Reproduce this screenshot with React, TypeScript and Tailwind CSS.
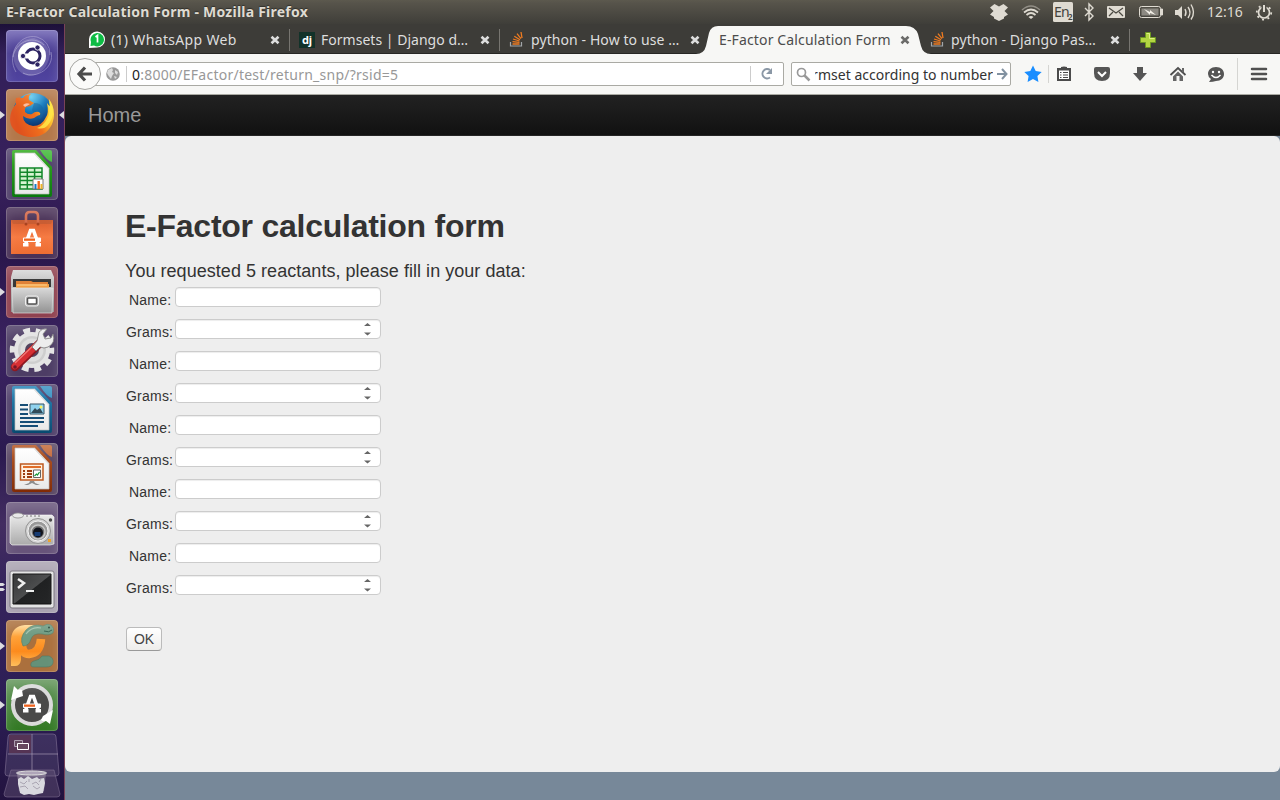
import React from "react";

const ui = "font-['Noto_Sans','Open_Sans',sans-serif]";

/* ---------- Launcher ---------- */

function Tile({ color, mark, focused, children }: { color: string; mark?: "one" | "two"; focused?: boolean; children: React.ReactNode }) {
  return (
    <div className="relative flex h-[52px] w-full shrink-0 justify-center pr-px">
      <div className={`relative h-[52px] w-[52px] overflow-hidden rounded-[4px] ${color}`}>
        <svg width="52" height="52" viewBox="0 0 52 52">{children}</svg>
        <div className="absolute inset-0 rounded-[4px] shadow-[inset_0_0_0_1px_rgba(255,255,255,0.17),inset_0_8px_12px_rgba(255,255,255,0.18)]" />
      </div>
      {mark === "one" && (
        <svg className="absolute left-0 top-[21px]" width="5" height="10"><path d="M0 1 5 5 0 9z" fill="#dcdce0" /></svg>
      )}
      {mark === "two" && (
        <svg className="absolute left-0 top-[21px]" width="5" height="10"><path d="M0 1h3l2 1.500-2 1.500H0zM0 6h3l2 1.500L3 9H0z" fill="#dcdce0" /></svg>
      )}
      {focused && (
        <svg className="absolute right-0 top-[21px]" width="6" height="10"><path d="M6 1 1 5 6 9z" fill="#dcdce0" /></svg>
      )}
    </div>
  );
}

function Sheet({ a, b, tint, children }: { a: string; b: string; tint: string; children: React.ReactNode }) {
  return (
    <>
      <defs>
        <linearGradient id={`g${a.slice(1)}`} x1="0" y1="0" x2="0" y2="1"><stop offset="0" stopColor={a} /><stop offset="1" stopColor={b} /></linearGradient>
        <linearGradient id="paper" x1="0" y1="0" x2="0" y2="1"><stop offset="0" stopColor="#fff" /><stop offset="1" stopColor="#e9e9e9" /></linearGradient>
      </defs>
      <path d="M8 2h22l16 17v28q0 2-2 2H8q-2 0-2-2V4q0-2 2-2z" fill={`url(#g${a.slice(1)})`} />
      <path d="M34 2h10q2 0 2 2v10q-5-1-12-12z" fill={tint} />
      <path d="M9 5h19l15 16v25H9z" fill="url(#paper)" stroke="#bdbdbd" strokeWidth=".7" />
      <path d="M28 5l15 16" stroke="#ddd" strokeWidth="1.500" />
      {children}
    </>
  );
}

function LetterA({ y = 0 }: { y?: number }) {
  return (
    <g transform={`translate(0 ${y})`}>
      <path d="M19.500 34 24.500 20h3L32.500 34" fill="none" stroke="#fff" strokeWidth="3.600" />
      <path d="M17 32.500h5.500v3.500H17zM29.500 32.500H35v3.500h-5.500z" fill="#fff" />
      <rect x="17" y="27" width="18" height="4.500" rx="1" fill="#fff" />
      <rect x="18" y="28" width="11" height="2.300" fill="#f0641e" />
    </g>
  );
}

function Launcher() {
  return (
    <aside className="relative flex w-[65px] shrink-0 flex-col gap-[7px] overflow-hidden border-r border-[#794359] bg-[linear-gradient(180deg,#1c1039_0px,#33205a_30px,#37205b_160px,#2a174c_230px,#3b2361_330px,#2b1a50_430px,#432d61_500px,#36245d_560px,#2c1e55_680px,#22133f_776px)] pt-[6px]">
      <Tile color="bg-[linear-gradient(180deg,#6c60b2,#483b91_45%,#5044a0)]">
        <g fill="none" stroke="#b3abd9" strokeOpacity=".55">
          <path d="M10 42C0 25 13 3 31 7q13 4 13 18" /><path d="M7 27C9 13 26 4 38 15" /><path d="M45 22c4 15-14 28-28 21" />
        </g>
        <path d="M7 26Q9 9 28 8q14 4 16 17Q40 45 23 46 9 43 7 26" fill="#fff" opacity=".16" />
        <circle cx="26" cy="26" r="14" fill="#fff" />
        <circle cx="27" cy="26" r="7" fill="none" stroke="#2c2362" strokeWidth="3" />
        <path d="M18 26h4M30 19l2-3M30 33l2 3" stroke="#fff" strokeWidth="5" />
        <g fill="#2c2362" stroke="#fff" strokeWidth=".8"><circle cx="17" cy="26" r="2.600" /><circle cx="31.500" cy="17.500" r="2.600" /><circle cx="31.500" cy="34.500" r="2.600" /></g>
      </Tile>
      <Tile color="bg-[#b37749]" mark="one" focused>
        <defs>
          <radialGradient id="globe" cx=".45" cy=".1" r=".8"><stop offset="0" stopColor="#67cdf0" /><stop offset=".45" stopColor="#187bbd" /><stop offset="1" stopColor="#0b2862" /></radialGradient>
          <linearGradient id="fox" gradientUnits="userSpaceOnUse" x1="46" y1="16" x2="10" y2="32"><stop offset="0" stopColor="#ffe640" /><stop offset=".25" stopColor="#fdb327" /><stop offset=".5" stopColor="#f0701d" /><stop offset="1" stopColor="#e0521d" /></linearGradient>
        </defs>
        <circle cx="27" cy="24" r="20" fill="url(#globe)" />
        <path d="M28 14q7 0 9 5 2 7-3 11l-5-3-3-6z" fill="#17649e" opacity=".5" />
        <path d="M10 9q-1 3 0 6-6 7-6 15c0 11 10 18 22 18 14 0 22-11 22-23 0-6-2-11-5-15l1 8-3-4q2 10-1 14-4 9-13 9-10-2-10-10 5 4 11 2 4-3 6-3 1-2-1-3-4-1-7 2-4 1-7-2-1-3 1-5l4-1 4-3-5-3q-1-4 2-6-6 0-8 4-4-1-7 0z" fill="url(#fox)" />
        <path d="M42 16q3 7-1 14-4 7-10 9 7 2 11-3 5-6 5-14-1-7-4-10 2 7-1 4z" fill="#ffe747" opacity=".85" />
        <path d="M17 16q3-3 7-1l-5 3z" fill="#f9bda0" />
      </Tile>
      <Tile color="bg-[#51416b]">
        <Sheet a="#35ae21" b="#08770c" tint="#43b93b">
          <path d="M14 20h22v21H14z" fill="#d6f4d1" />
          <path d="M14 20h22v21H14zM14 24.200h22M14 28.400h22M14 32.600h22M14 36.800h22M21.300 20v21M28.600 20v21" fill="none" stroke="#12862a" strokeWidth="1.500" />
          <path d="M27 31h10v10H27z" fill="#fff" stroke="#777" /><path d="M28.500 36h2v5h-2z" fill="#187ac4" /><path d="M31.500 33h2.400v8h-2.400z" fill="#f06a1c" /><path d="M34.500 36h2v5h-2z" fill="#efb52a" />
        </Sheet>
      </Tile>
      <Tile color="bg-[#493157]">
        <defs><linearGradient id="bag" x2="0" y2="1"><stop stopColor="#d95c2e" /><stop offset=".5" stopColor="#f67b43" /><stop offset="1" stopColor="#ed6d32" /></linearGradient></defs>
        <path d="M5 13h42v34H5z" fill="url(#bag)" />
        <path d="M5 13h42l-2 4H7z" fill="#b4552f" opacity=".5" />
        <path d="M20 17V9q0-4 4-4h4q4 0 4 4v8" fill="none" stroke="#d66b4b" strokeWidth="2.600" />
        <circle cx="20" cy="17" r="1.500" fill="#a9411e" /><circle cx="32" cy="17" r="1.500" fill="#a9411e" />
        <LetterA y={3.5} />
      </Tile>
      <Tile color="bg-[#8f414f]" mark="one">
        <defs><linearGradient id="steel" x2="0" y2="1"><stop stopColor="#d8d8d8" /><stop offset="1" stopColor="#929292" /></linearGradient></defs>
        <path d="M7 4h38l3 7v35H5V11z" fill="url(#steel)" />
        <path d="M7 13h38v8H7z" fill="#353535" />
        <path d="M10 15h15l2 1h15v6H10z" fill="#e08135" /><path d="M10 18h33v5H10z" fill="#f2a044" /><path d="M11 19h30" stroke="#ffd594" />
        <path d="M6 22h41l-1 25H7z" fill="url(#steel)" stroke="#dedede" strokeWidth=".7" />
        <rect x="19.500" y="30" width="13" height="10" rx="2" fill="#b6b6b6" stroke="#eee" /><rect x="21.500" y="32" width="9" height="6" rx="1" fill="#fff" stroke="#555" strokeWidth="1.500" />
      </Tile>
      <Tile color="bg-[#4d3d65]">
        <circle cx="26" cy="25" r="19.500" fill="none" stroke="#e4e4e4" strokeWidth="5.500" strokeDasharray="6.600 5.655" strokeDashoffset="3" />
        <circle cx="26" cy="25" r="18" fill="#e4e4e4" /><circle cx="26" cy="25" r="14" fill="#cecece" /><circle cx="26" cy="25" r="11.500" fill="#dedede" /><circle cx="26" cy="25" r="7" fill="#54445e" />
        <path d="M9 42 35 17" stroke="#8d1720" strokeWidth="8.500" strokeLinecap="round" /><path d="M9 41 34 17" stroke="#d62f33" strokeWidth="6.500" strokeLinecap="round" /><path d="M9 38 30 18" stroke="#ee7874" strokeWidth="1.500" />
        <path d="m31 16 2-9q3-4 8-3l-4 5 2 5 6-1 2-4q3 9-5 13-4 2-8 0l-4 4-4-4z" fill="#ededed" stroke="#777" strokeWidth=".8" />
        <circle cx="9" cy="42" r="1.800" fill="#711625" />
      </Tile>
      <Tile color="bg-[#51416b]">
        <Sheet a="#2787bb" b="#074a70" tint="#3c94c4">
          <path d="M14 20h8v2h-8zM14 24.500h8v2h-8zM14 29h8v2h-8zM14 33h24v2H14zM14 37h24v2H14zM14 41h18v2H14z" fill="#174e76" />
          <path d="M24 20h14v10H24z" fill="#8fd2ee" stroke="#385565" /><path d="m25 29 4-5 2 2 3-2 3 5z" fill="#314b59" /><circle cx="35" cy="23" r="1.500" fill="#fff25c" />
        </Sheet>
      </Tile>
      <Tile color="bg-[#594764]">
        <Sheet a="#b85825" b="#812a04" tint="#c46b3c">
          <path d="M14.500 21h22.500v16H14.500z" fill="#fff0df" stroke="#be5a21" strokeWidth="1.500" /><path d="M17 23h18v2H17z" fill="#e06e29" />
          <path d="M17 27h2v2h-2zM17 30h2v2h-2zM17 33h2v2h-2zM21 27h5v2h-5zM21 30h5v2h-5zM21 33h5v2h-5z" fill="#9d3d10" /><path d="M27.500 27h7v7.500h-7z" fill="#fff" stroke="#666" /><path d="m28.500 33 2-2 1 1 2-3" fill="none" stroke="#169936" strokeWidth="1.200" />
          <path d="M24 38h4l1 2 5 2h-4l-4-2-4 2h-4l5-2z" fill="#8d8d8d" />
        </Sheet>
      </Tile>
      <Tile color="bg-[#67547a]">
        <defs><linearGradient id="camera" x2="0" y2="1"><stop stopColor="#ededed" /><stop offset="1" stopColor="#aaa" /></linearGradient></defs>
        <path d="M7 13q5-3 9 0h30l2 2v27L44 43H6l-2-2V15z" fill="url(#camera)" stroke="#fff" strokeWidth=".6" />
        <ellipse cx="12" cy="13.500" rx="5.500" ry="2.500" fill="#e9e9e9" stroke="#888" strokeWidth=".8" /><path d="M20 14h16" stroke="#777" strokeDasharray="2 2" />
        <circle cx="32" cy="29" r="12.500" fill="#d4d4d4" stroke="#929292" /><circle cx="32" cy="29" r="10" fill="#999" stroke="#f2f2f2" /><circle cx="32" cy="30" r="7" fill="#777" stroke="#c8c8c8" strokeWidth="1.500" /><circle cx="32" cy="30.500" r="5" fill="#11131b" /><path d="M28.500 30h6v4h-6z" fill="#173c74" />
        <circle cx="44.500" cy="18" r="1.700" fill="#444" /><path d="M42 37h3v3h-3z" fill="#eea32b" />
      </Tile>
      <Tile color="bg-[#aaa3b1]" mark="two">
        <defs><linearGradient id="term" x2="1" y2="1"><stop stopColor="#343536" /><stop offset=".5" stopColor="#4c4d4e" /><stop offset=".52" stopColor="#202122" /><stop offset="1" stopColor="#252627" /></linearGradient></defs>
        <path d="M4 12q0-2 2-2h40q2 0 2 2v33q0 2-2 2H6q-2 0-2-2z" fill="#e4e4e4" stroke="#77737c" />
        <path d="M7 13h38v30H7z" fill="url(#term)" stroke="#111" />
        <path d="m12 18 6 4-6 5" fill="none" stroke="#eee" strokeWidth="2.500" /><path d="M20 30h8" stroke="#eee" strokeWidth="2" />
      </Tile>
      <Tile color="bg-[#ab703d]" mark="one">
        <defs><linearGradient id="charm" gradientUnits="userSpaceOnUse" x1="0" y1="4" x2="0" y2="46"><stop stopColor="#ffe0a0" /><stop offset=".3" stopColor="#ffa238" /><stop offset=".65" stopColor="#fc8a1c" /><stop offset="1" stopColor="#ffbf5a" /></linearGradient></defs>
        <path d="M25 46q-1-4 3-5 6-1 8-5h7q5 2 4 7-1 4-7 4H28q-2 0-3-1z" fill="#659178" stroke="#4f7a64" strokeWidth=".6" />
        <path d="M5 46V19Q6 6 19 5h11q-8 4-11 11-4 5-4 12v12q-1 6-6 6z" fill="url(#charm)" />
        <path d="M16 20v4q0 10 7 10 11-1 12-15" fill="none" stroke="url(#charm)" strokeWidth="8.500" />
        <path d="M17 26q-4-8 3-16 7-7 17-4 4-3 8-1 4 3 2 8-4 3-11 1-9-1-11 5-2 7-8 7z" fill="#6f9b82" stroke="#547d67" strokeWidth=".6" />
        <path d="M20 14q6-8 15-6" fill="none" stroke="#a3c3ad" strokeWidth="1.200" /><path d="M38 11q5 2 8-1" fill="none" stroke="#315d4c" /><circle cx="43" cy="7.500" r="1" fill="#234539" />
      </Tile>
      <Tile color="bg-[linear-gradient(180deg,#63955b,#317822)]" mark="one">
        <circle cx="26" cy="26" r="19" fill="#4a4a49" stroke="#dadada" strokeWidth="4" />
        <path d="m5 21 3-14 4 4q2-1 4 0l1 6z" fill="#fff" /><path d="m47 31-3 14-4-3q-3 1-5-1l2-4z" fill="#fff" />
        <LetterA y={-2.5} />
      </Tile>
      <svg className="-mt-[6px] shrink-0" width="64" height="67" viewBox="0 0 64 67">
        <path d="M11 2h42q3 0 3 3l3 36q0 3-3 3H8q-3 0-3-3L8 5q0-3 3-3z" fill="#6b5f86" fillOpacity=".32" stroke="#8c7c9e" strokeOpacity=".55" />
        <path d="M32 2v40M8 22h50" stroke="#b5a7bf" strokeOpacity=".6" />
        <path d="M9 3h22v18H9z" fill="#623850" opacity=".65" /><path d="M14.500 8.500h8v6h-8z" fill="#63495f" stroke="#ad9eb0" /><path d="M17.500 11.500h11v6h-11z" fill="#67495f" stroke="#fff" />
        <path d="m11 38-7 24q0 3 3 3h50q3 0 3-3l-6-24z" fill="#776688" fillOpacity=".35" stroke="#87779a" strokeOpacity=".5" />
        <path d="m17 41 2 18q13 3 25 0l2-18z" fill="#b8afbe" fillOpacity=".4" /><ellipse cx="31.500" cy="41" rx="15" ry="2" fill="#afa5b9" stroke="#ddd" />
        <path d="m18 47 3-2 3 2 4-3 4 3 5-2 2 2 5-1 1 5-1 5-1 5-5 1-4 1-5-1-5 1-4-2-1-5-1-4z" fill="#d9d9df" />
        <path d="m20 50 4 2 3-3m5 3 4-2 3 3M20 55l5-1 3 3m5-3 4 3 3-2M29 47v3M41 47l-2 3" stroke="#aaa5b2" fill="none" />
      </svg>
    </aside>
  );
}

/* ---------- Top panel ---------- */

function StatusIcons() {
  return (
    <svg className="absolute right-0 top-0" width="300" height="24" viewBox="980 0 300 24" fill="none" stroke="#dfdbd2">
      <path d="m994.500 4 4.500 2.500 4.500-2.500 4.500 3.500-3.500 3.500 3.500 3.500-4 2.500v1.500l-5 2.500-5-2.500V17l-4-2.500 3.500-3.500-3.500-3.500z" fill="#dfdbd2" stroke="none" />
      <path d="M1022 10q9-8 18 0" strokeWidth="1.500" opacity=".45" /><path d="M1024 12.500q7-6 14 0M1026.500 15q4.500-4 9 0" strokeWidth="1.700" /><path d="m1028.500 17 2.500 2 2.500-2q-2.500-2-5 0" fill="#dfdbd2" stroke="none" />
      <rect x="1053" y="2" width="20" height="20" rx="1.500" fill="#dfdbd2" stroke="none" />
      <path d="m1085 8 8 8-4 4V4l4 4-8 8" strokeWidth="1.400" />
      <rect x="1107" y="6" width="18" height="12" rx="1" fill="#dfdbd2" stroke="none" /><path d="m1109 8 7 5 7-5M1109 16l4-4M1123 16l-4-4" stroke="#4c4a43" strokeWidth="1.200" />
      <rect x="1139.500" y="6.500" width="21" height="11" rx="2" /><rect x="1141.500" y="8.500" width="17" height="7" fill="#8c8982" stroke="none" /><path d="M1161 9h1.500v6h-1.500" fill="#dfdbd2" /><path d="m1144 9 6 3v-2l6 5-6-2v2z" fill="#f2efe7" stroke="none" />
      <path d="M1175 10h3l4-4v13l-4-4h-3z" fill="#dfdbd2" stroke="none" /><path d="M1185 9q2 3.500 0 7M1188 7q4 5.500 0 11" strokeWidth="1.400" /><path d="M1191 4.500q5 8 0 15" strokeWidth="1.400" />
      <circle cx="1264" cy="12.500" r="5.500" strokeWidth="1.700" /><circle cx="1264" cy="12.500" r="7.200" strokeWidth="1.800" strokeDasharray="2 3.600" /><path d="M1264 2v10" stroke="#4f4d46" strokeWidth="5" /><path d="M1264 5v7" strokeWidth="2" />
    </svg>
  );
}

function TopPanel() {
  return (
    <header className={`relative flex h-6 shrink-0 items-center bg-[linear-gradient(180deg,#5c594e,#56534a_15%,#3f3e39)] text-[#dfdbd2] ${ui}`}>
      <span className="-mt-px pl-[6px] text-[14px] font-bold tracking-[0.230px] [text-shadow:0_-1px_1px_#302f2b] whitespace-nowrap">E-Factor Calculation Form - Mozilla Firefox</span>
      <StatusIcons />
      <span className="absolute left-[1054px] top-[2px] text-[14px] leading-5 tracking-[-0.900px] text-[#45433d]">En</span>
      <span className="absolute left-[1068px] top-[11px] text-[8px] leading-3 font-semibold text-[#45433d]">2</span>
      <span className="absolute left-[1207px] top-[2px] text-[14px] leading-5 tracking-[-0.020px]">12:16</span>
    </header>
  );
}

/* ---------- Browser ---------- */

function Close({ dark }: { dark?: boolean }) {
  return <svg className="shrink-0" width="10" height="10" viewBox="0 0 10 10"><path d="m1.500 1.800 7 6.500m0-6.500-7 6.500" stroke={dark ? "#6b6b69" : "#dedede"} strokeWidth="2.600" /></svg>;
}

function Overflow() {
  return (
    <svg width="14" height="16" viewBox="0 0 14 16" fill="none">
      <path d="M1.500 10v4h11v-4" stroke="#a2a6a9" strokeWidth="1.200" /><path d="M3.500 12h7M3.500 9.700l7 .6M4 7l6.500 2M5.300 4.200 11 7.700M8 1.600l4 5M12 0l1 6" stroke="#ef7b20" strokeWidth="1.300" />
    </svg>
  );
}

function Tab({ icon, text, spacing, last }: { icon: React.ReactNode; text: string; spacing: string; last?: boolean }) {
  return (
    <div className="flex h-[29px] w-[210px] shrink-0 items-center pt-[2px] pl-[9px]">
      <span className="flex w-[22px] shrink-0 items-center">{icon}</span>
      <span className={`w-[159px] whitespace-nowrap text-[14px] text-[#dedede] ${spacing}`}>{text}</span>
      <Close />
      <span className={`ml-[9px] h-[22px] w-px ${last ? "bg-transparent" : "bg-[#777570]"}`} />
    </div>
  );
}

function Tabs() {
  return (
    <div className={`flex h-[30px] shrink-0 border-b border-[#272724] bg-[#3d3c38] pl-[15px] ${ui}`}>
      <Tab spacing="tracking-[0.330px]" text="(1) WhatsApp Web" icon={
        <svg className="-ml-px" width="18" height="18" viewBox="0 0 18 18"><path d="M1 17V8a8 8 0 1 1 8 8.500z" fill="#fff" /><path d="m2.500 15 .5-4a6.700 6.700 0 1 1 3 3.500z" fill="#0ebc45" /><path d="m7.500 6 2-1.500v7" stroke="#fff" strokeWidth="1.700" fill="none" /></svg>} />
      <Tab spacing="tracking-[0.020px]" text="Formsets | Django d…" icon={
        <span className="flex h-4 w-4 items-start justify-center bg-[#123229] text-[11px] leading-[15px] font-bold text-white">dj</span>} />
      <Tab spacing="tracking-[0.090px]" last text="python - How to use …" icon={<Overflow />} />
      <div className="relative flex h-[30px] w-[210px] shrink-0 items-center pt-[1px] pl-[9px]">
        <svg className="absolute -left-[14px] top-[2px]" width="240" height="28" viewBox="0 0 240 28"><path d="M0 28q8 0 10-8l3-13Q15 0 22 0h188q9 0 12 8l3 12q2 8 10 8z" fill="#f7f7f5" /></svg>
        <span className="relative w-[181px] whitespace-nowrap text-[14px] tracking-[0.140px] text-[#4c4c4c]">E-Factor Calculation Form</span>
        <span className="relative"><Close dark /></span>
      </div>
      <Tab spacing="tracking-[0.080px]" text="python - Django Pas…" icon={<span className="pl-[1px]"><Overflow /></span>} />
      <svg className="mt-[8px] ml-[10px]" width="16" height="16" viewBox="0 0 16 16"><path d="M5.500.5h5v5h5v5h-5v5h-5v-5h-5v-5h5z" fill="#b3d542" stroke="#6d9722" /><path d="M6.500 1.500h3v5h5" stroke="#dff084" fill="none" /></svg>
    </div>
  );
}

function Toolbar() {
  return (
    <div className={`relative flex h-[41px] shrink-0 items-center border-b border-[#aaaaa3] bg-[#f7f7f5] pl-[4px] ${ui}`}>
      <svg className="relative z-10 shrink-0" width="32" height="32" viewBox="0 0 32 32"><circle cx="16" cy="16" r="15.500" fill="#fafaf9" stroke="#a5a5a2" /><path d="M16 9.500 10 16l6 6.500M10.500 16H23" fill="none" stroke="#4b4b4b" strokeWidth="3.200" /></svg>
      <div className="-ml-[12px] flex h-6 w-[695px] shrink-0 items-center rounded-r-[2px] border border-[#aaaaa4] bg-white pl-[16px]">
        <svg className="shrink-0" width="14" height="14" viewBox="0 0 14 14"><circle cx="7" cy="7" r="6.800" fill="#999" /><path d="M2 3 6 1l1 2-1 2 2 1-2 3-1 3-3-4-1-2zM9 3l3 2-1 3-2-2zM8 9l3 1-2 2z" fill="#ddd" /></svg>
        <span className="ml-[6px] h-4 w-px bg-[#ccc]" />
        <span className="ml-[5px] w-[618px] whitespace-nowrap text-[14px] tracking-[0.250px] text-[#989898]"><span className="text-[#222]">0</span>:8000/EFactor/test/return_snp/?rsid=5</span>
        <span className="h-4 w-px bg-[#ccc]" />
        <svg className="ml-[9px] shrink-0" width="14" height="14" viewBox="0 0 14 14"><path d="M10 10.500A4.700 4.700 0 1 1 10 3" fill="none" stroke="#8b98a6" strokeWidth="2" /><path d="M12 1v6H6z" fill="#8b98a6" /></svg>
      </div>
      <div className="ml-[7px] flex h-6 w-[220px] shrink-0 items-center overflow-hidden rounded-[2px] border border-[#aaaaa4] bg-white pl-[4px]">
        <svg className="shrink-0" width="15" height="15" viewBox="0 0 15 15" fill="none" stroke="#999"><circle cx="5.500" cy="5.500" r="4" strokeWidth="1.700" /><path d="m8.500 8.500 5 5" strokeWidth="2.500" /></svg>
        <span className="ml-[4px] flex w-[178px] justify-end overflow-hidden whitespace-nowrap text-[14px] tracking-[0.020px] text-[#333]">rmset according to number</span>
        <svg className="ml-[3px] shrink-0" width="12" height="12" viewBox="0 0 12 12"><path d="M1 6h9M6 1l4.500 5L6 11" fill="none" stroke="#8292a1" strokeWidth="2" /></svg>
      </div>
      <svg className="shrink-0" width="269" height="40" viewBox="1011 54 269 40">
        <path d="m1033 65.500 2.700 5.500 6 .9-4.300 4.200 1 6-5.400-3-5.400 3 1-6-4.300-4.200 6-.9z" fill="#198dff" />
        <path d="M1048.500 65v18M1237.500 58v32" stroke="#d5d5d2" />
        <path d="M1058 69h12v11h-12z" fill="#fff" stroke="#4b4b4b" strokeWidth="2" /><path d="M1061 69v-2q3-1 6 0v2z" fill="#4b4b4b" /><path d="M1057 69.500h14" stroke="#4b4b4b" strokeWidth="2" /><path d="M1060 72.500h1.500m1.500 0h5m-8 2.500h1.500m1.500 0h5m-8 2.500h1.500m1.500 0h5" stroke="#4b4b4b" strokeWidth="1.200" />
        <path d="M1096 67h12q2 0 2 2v4q0 8-8 8t-8-8v-4q0-2 2-2z" fill="#555" /><path d="m1098 72 4 4 4-4" fill="none" stroke="#fff" strokeWidth="2" />
        <path d="M1137 67h6v6h4l-7 8-7-8h4z" fill="#555" />
        <path d="m1170.500 75 7.500-7 7.500 7" stroke="#4e4e4e" strokeWidth="1.800" fill="none" /><path d="m1173 76.500 5-5 5 5v4.500h-3.500v-5h-3v5h-3.500z" fill="#666" /><path d="M1183 68v4" stroke="#666" strokeWidth="2" />
        <path d="M1216 67c5 0 8 3 8 7s-3 7-8 7q-3 1-7 1l2-3q-3-2-3-5c0-4 3-7 8-7z" fill="#555" /><circle cx="1213" cy="72" r="1.200" fill="#fff" /><circle cx="1219" cy="72" r="1.200" fill="#fff" /><path d="M1211.500 75q4.500 5 9 0" stroke="#fff" fill="none" strokeWidth="1.500" />
        <path d="M1252 69h14m-14 5h14m-14 5h14" stroke="#505050" strokeWidth="2.500" strokeLinecap="round" />
      </svg>
    </div>
  );
}

/* ---------- Page ---------- */

function Field({ label, numeric }: { label: string; numeric?: boolean }) {
  return (
    <label className="flex h-8 items-start text-sm leading-5 text-[#333]">
      <span className={`w-[50px] pt-[3px] whitespace-nowrap ${numeric ? "pl-[1px] tracking-[0.220px]" : "pl-[4px] tracking-[0.200px]"}`}>{label}</span>
      <span className="relative flex h-5 w-[206px]">
        <input type="text" aria-label={label} className="h-5 w-full rounded-[4px] border border-[#ccc] bg-white px-1.5 text-sm shadow-[inset_0_1px_1px_rgba(0,0,0,0.075)] outline-none" />
        {numeric && <svg className="absolute right-[10px] top-[4px]" width="7" height="13" viewBox="0 0 7 13"><path d="M3.500 0 7 3H0zM0 9.500h7L3.500 12.500z" fill="#666" /></svg>}
      </span>
    </label>
  );
}

function Page() {
  return (
    <div className="flex min-h-0 flex-1 flex-col bg-[#778899] font-['Liberation_Sans',sans-serif]">
      <nav className="flex h-[41px] shrink-0 items-center border-b border-[#252525] bg-[linear-gradient(180deg,#222,#111)] pl-[23px] text-xl text-[#999]">Home</nav>
      <main className="h-[636px] shrink-0 rounded-[6px] bg-[#eee] pt-[70px] pl-[60px] text-[#333]">
        <h1 className="h-10 text-[32px] leading-10 font-bold tracking-[-0.250px]">E-Factor calculation form</h1>
        <p className="mt-[10px] h-[31px] text-lg leading-[30px] tracking-[0.040px]">You requested 5 reactants, please fill in your data:</p>
        <form>
          {[0, 1, 2, 3, 4].map((n) => (
            <div key={n}><Field label="Name:" /><Field label="Grams:" numeric /></div>
          ))}
          <button type="button" className="mt-[20px] ml-[1px] flex h-6 w-9 items-center justify-center rounded-[4px] border border-[#bbb] border-b-[#999] bg-[linear-gradient(180deg,#fff,#eeedeb)] text-sm text-[#444]">OK</button>
        </form>
      </main>
    </div>
  );
}

export default function App() {
  return (
    <div className="flex h-[800px] w-[1280px] flex-col overflow-hidden">
      <TopPanel />
      <div className="flex min-h-0 flex-1">
        <Launcher />
        <div className="flex min-w-0 flex-1 flex-col">
          <Tabs />
          <Toolbar />
          <Page />
        </div>
      </div>
    </div>
  );
}
